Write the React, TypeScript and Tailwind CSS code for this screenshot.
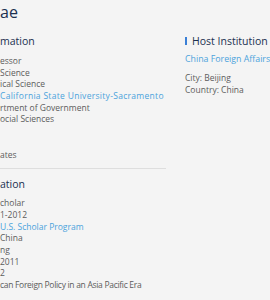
type Line = { text: string; link?: boolean; fit?: string }

const homeLines: Line[] = [
  { text: 'essor' },
  { text: 'Science' },
  { text: 'ical Science' },
  { text: 'California State University-Sacramento', link: true, fit: 'tracking-[0.3px]' },
  { text: 'rtment of Government' },
  { text: 'ocial Sciences' },
  { text: '' },
  { text: '' },
  { text: 'ates' },
]

const grantLines: Line[] = [
  { text: 'cholar' },
  { text: '1-2012' },
  { text: 'U.S. Scholar Program', link: true },
  { text: 'China' },
  { text: 'ng' },
  { text: '2011' },
  { text: '2' },
  { text: 'can Foreign Policy in an Asia Pacific Era', fit: 'tracking-[-0.3px]' },
]

function Section({ title, lines, gap, pb }: { title: string; lines: Line[]; gap: string; pb: string }) {
  return (
    <section className={`pt-[7px] border-b border-[#dedede] ${pb}`}>
      <h2 className="text-[10.5px] leading-[16px] font-medium text-[#1b3050]">{title}</h2>
      <ul className={gap}>
        {lines.map((l, i) => (
          <li
            key={i}
            className={`h-[11.7px] text-[8.5px] leading-[11.7px] whitespace-nowrap ${l.fit ?? ''} ${l.link ? 'text-[#4ba3dc]' : 'text-[#5c5c5c]'}`}
          >
            {l.text}
          </li>
        ))}
      </ul>
    </section>
  )
}

export default function App() {
  return (
    <div className="w-[270px] h-[300px] overflow-hidden bg-[#f4f4f4] font-['Open_Sans',sans-serif]">
      <h1 className="pt-[2px] text-[16px] leading-[20px] font-medium text-[#1b3050]">ae</h1>
      <div className="flex gap-[19px] mt-[4px]">
        <div className="w-[166px] shrink-0">
          <Section title="mation" lines={homeLines} gap="mt-[6px]" pb="pb-[8px]" />
          <Section title="ation" lines={grantLines} gap="mt-[5px]" pb="pb-[9px]" />
        </div>
        <div className="flex-1 min-w-0 pt-[7px]">
          <h2 className="flex items-center gap-[5px] text-[10.5px] leading-[16px] font-medium text-[#1b3050] whitespace-nowrap">
            <span className="w-[2px] h-[8px] bg-[#3a7fd6]" />
            Host Institution
          </h2>
          <p className="mt-[4px] text-[8.8px] leading-[13px] text-[#4ba3dc] whitespace-nowrap">
            China Foreign Affairs
          </p>
          <div className="mt-[6px] text-[8.5px] leading-[12px] text-[#5c5c5c]">
            <p>City: Beijing</p>
            <p>Country: China</p>
          </div>
        </div>
      </div>
    </div>
  )
}
